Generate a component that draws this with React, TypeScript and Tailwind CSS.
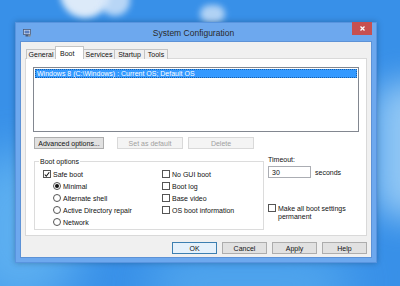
import React from 'react'

const ui = "font-['Liberation_Sans',Arial,sans-serif]"

function Check({ checked, label }: { checked?: boolean; label: string }) {
  return (
    <div className="flex items-center h-3 gap-[2px]">
      <span className="w-[8px] h-[8px] border border-[#555] bg-white flex items-center justify-center shrink-0">
        {checked && (
          <svg className="w-[7px] h-[7px]" viewBox="0 0 8 8" fill="none" stroke="#111" strokeWidth={1.4}>
            <path d="M1 4 L3 6.3 L7 1" />
          </svg>
        )}
      </span>
      <span>{label}</span>
    </div>
  )
}

function Radio({ checked, label }: { checked?: boolean; label: string }) {
  return (
    <div className="flex items-center h-3 gap-[2px]">
      <span className="w-[8px] h-[8px] rounded-full border border-[#555] bg-white flex items-center justify-center shrink-0">
        {checked && <span className="w-[4px] h-[4px] rounded-full bg-[#111]" />}
      </span>
      <span>{label}</span>
    </div>
  )
}

function Button({ label, disabled, primary, className = '' }: { label: string; disabled?: boolean; primary?: boolean; className?: string }) {
  return (
    <div
      className={`h-[12px] flex items-center justify-center border ${
        disabled
          ? 'bg-[#f4f4f4] border-[#d9d9d9] text-[#a0a0a0]'
          : primary
          ? 'bg-[#e5f1fb] border-[#3c7fb1] text-[#111]'
          : 'bg-[#e1e1e1] border-[#adadad] text-[#111]'
      } ${className}`}
    >
      {label}
    </div>
  )
}

function Tab({ label, width }: { label: string; width: string }) {
  return (
    <div className={`h-[10px] ${width} border border-b-0 border-[#c4c4c4] bg-[#f0f0f0] flex items-center justify-center -ml-px whitespace-nowrap`}>
      {label}
    </div>
  )
}

export default function App() {
  return (
    <div className={`relative w-[400px] h-[286px] overflow-hidden bg-[#3890e8] ${ui} text-[7px] text-[#111] leading-none`}>
      {/* wallpaper */}
      <div className="absolute -left-10 top-[150px] w-[120px] h-[160px] rounded-full bg-[#6cbcf4] blur-xl opacity-70" />
      <div className="absolute left-[60px] -top-8 w-[50px] h-[50px] rounded-full bg-[#eef4fb] blur-[3px] opacity-90" />
      <div className="absolute left-[100px] -top-6 w-[30px] h-[40px] rounded-full bg-[#d8e8fa] blur-[3px] opacity-80" />
      <div className="absolute left-[200px] top-[5px] w-[25px] h-[18px] rounded-full bg-[#cfe3f8] blur-[3px] opacity-80" />
      <div className="absolute left-[375px] top-[80px] w-[60px] h-[140px] rounded-full bg-[#a9d6f8] blur-lg opacity-80" />
      <div className="absolute left-[150px] top-[255px] w-[200px] h-[60px] rounded-full bg-[#5fb2f0] blur-xl opacity-70" />

      {/* window */}
      <div className="absolute left-[15px] top-[22px] w-[362px] h-[241px] bg-[#6da8ee] border border-[#5894df] flex flex-col px-[4px] pb-[4px] shadow-[0_0_6px_rgba(0,0,0,0.25)]">
        {/* title bar */}
        <div className="h-[18px] flex items-center relative shrink-0">
          <svg className="w-[8px] h-[8px] ml-[3px] mt-[2px]" viewBox="0 0 8 8">
            <rect x="0.5" y="0.5" width="7" height="5" fill="#dfe7f2" stroke="#4a5a78" strokeWidth={0.8} />
            <rect x="1.5" y="1.5" width="5" height="3" fill="#5a7fc0" />
            <rect x="2.5" y="6" width="3" height="1.5" fill="#4a5a78" />
            <circle cx="6.5" cy="6.5" r="1.2" fill="#8a8a8a" />
          </svg>
          <div className="flex-1 text-center text-[8.5px] text-[#2a2a2a] mt-[3px] pl-[4px]">System Configuration</div>
          <div className="w-[20px] h-[13px] bg-[#c75050] self-start -mt-[1px] flex items-center justify-center">
            <svg className="w-[5px] h-[5px]" viewBox="0 0 5 5" stroke="white" strokeWidth={1.3}>
              <path d="M0.5 0.5 L4.5 4.5 M4.5 0.5 L0.5 4.5" />
            </svg>
          </div>
        </div>

        {/* client */}
        <div className="flex-1 bg-[#f0f0f0] border border-[#5d92d6] px-[4px] pt-[4px] flex flex-col">
          {/* tabs */}
          <div className="flex items-end h-[13px] pl-[2px] relative z-10">
            <Tab label="General" width="w-[30px]" />
            <div className="h-[13px] w-[29px] border border-b-0 border-[#c4c4c4] bg-white flex items-start pt-[3px] pl-[4px] -ml-px">Boot</div>
            <Tab label="Services" width="w-[32px]" />
            <Tab label="Startup" width="w-[31px]" />
            <Tab label="Tools" width="w-[24px]" />
          </div>
          <div className="h-[178px] bg-white border border-[#d9d9d9] -mt-px px-[7px] pt-[8px] flex flex-col">
            {/* list */}
            <div className="h-[65px] border border-[#828790] bg-white p-px">
              <div className="h-[9px] bg-[#3399ff] text-white flex items-center pl-[2px] outline-1 outline-dotted outline-[#1a5fa8] -outline-offset-1">
                Windows 8 (C:\Windows) : Current OS; Default OS
              </div>
            </div>
            <div className="flex mt-[5px] pl-px">
              <Button label="Advanced options..." className="w-[70px]" />
              <Button label="Set as default" disabled className="w-[66px] ml-[13px]" />
              <Button label="Delete" disabled className="w-[66px] ml-[5px]" />
            </div>
            <div className="flex mt-[9px] pl-px">
              {/* boot options group */}
              <div className="relative w-[230px] h-[69px] border border-[#dcdcdc] mt-[3px] pl-[8px] pt-[6px] flex">
                <span className="absolute -top-[4px] left-[4px] bg-white px-px">Boot options</span>
                <div className="w-[119px] flex flex-col">
                  <Check checked label="Safe boot" />
                  <div className="pl-[10px] flex flex-col">
                    <Radio checked label="Minimal" />
                    <Radio label="Alternate shell" />
                    <Radio label="Active Directory repair" />
                    <Radio label="Network" />
                  </div>
                </div>
                <div className="flex flex-col">
                  <Check label="No GUI boot" />
                  <Check label="Boot log" />
                  <Check label="Base video" />
                  <Check label="OS boot information" />
                </div>
              </div>
              {/* timeout */}
              <div className="ml-[4px] flex flex-col">
                <span className="mt-[-2px]">Timeout:</span>
                <div className="flex items-center mt-[3px]">
                  <div className="w-[43px] h-[12px] border border-[#abadb3] bg-white flex items-center pl-[3px]">30</div>
                  <span className="ml-[4px]">seconds</span>
                </div>
                <div className="flex items-start mt-[26px] gap-[2px]">
                  <span className="w-[8px] h-[8px] border border-[#555] bg-white shrink-0" />
                  <span className="leading-[8px] mt-px">Make all boot settings<br />permanent</span>
                </div>
              </div>
            </div>
          </div>
          {/* dialog buttons */}
          <div className="flex justify-end gap-[5px] mt-[6px]">
            <Button label="OK" primary className="w-[45px]" />
            <Button label="Cancel" className="w-[45px]" />
            <Button label="Apply" className="w-[45px]" />
            <Button label="Help" className="w-[45px]" />
          </div>
        </div>
      </div>
    </div>
  )
}
